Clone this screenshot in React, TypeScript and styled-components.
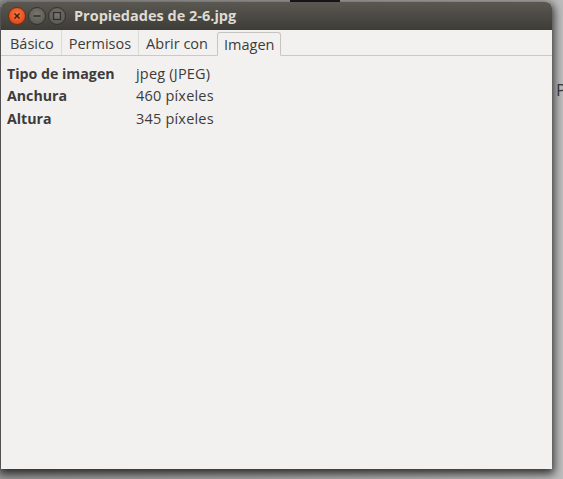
import React from "react";
import styled, { createGlobalStyle } from "styled-components";

const Global = createGlobalStyle`
  html, body { margin: 0; padding: 0; }
  body {
    width: 563px;
    height: 479px;
    overflow: hidden;
    background: #cfcfcf;
    font-family: "Open Sans", "DejaVu Sans", sans-serif;
  }
`;

const Desktop = styled.div`
  position: relative;
  width: 563px;
  height: 479px;
  overflow: hidden;
  background: linear-gradient(to right, #9a9a9a 0, #bdbdbd 100%);
`;

const BackgroundLetter = styled.span`
  position: absolute;
  left: 556px;
  top: 78px;
  font-size: 17px;
  color: #3c3c3c;
`;

const BackgroundBlock = styled.div`
  position: absolute;
  left: 290px;
  top: 0;
  width: 50px;
  height: 3px;
  background: #1c1d22;
`;

const Window = styled.div`
  position: absolute;
  left: 1px;
  top: 2px;
  width: 551px;
  height: 467px;
  display: flex;
  flex-direction: column;
  background: #f2f1f0;
  border-radius: 6px 6px 0 0;
  box-shadow: 0 3px 10px 2px rgba(0, 0, 0, 0.75);
  overflow: hidden;
`;

const TitleBar = styled.div`
  height: 28px;
  flex: none;
  display: flex;
  align-items: center;
  padding-left: 7px;
  background: linear-gradient(to bottom, #5a5851 0%, #3d3c37 100%);
`;

const Controls = styled.div`
  display: flex;
  gap: 2px;
  align-items: center;
`;

const WinButton = styled.div<{ $close?: boolean }>`
  width: 18px;
  height: 18px;
  border-radius: 50%;
  box-sizing: border-box;
  display: flex;
  align-items: center;
  justify-content: center;
  background: ${(p) =>
    p.$close
      ? "radial-gradient(circle at 50% 40%, #f47a4a 0%, #e5521f 60%, #c8401a 100%)"
      : "radial-gradient(circle at 50% 40%, #77766f 0%, #5d5c56 70%, #4a4944 100%)"};
  border: 1px solid ${(p) => (p.$close ? "#7a2a10" : "#34332f")};
`;

const Title = styled.div`
  margin-left: 8px;
  color: #dfdbd2;
  font-weight: 700;
  font-size: 14.5px;
  line-height: 1;
`;

const TabBar = styled.div`
  height: 25px;
  flex: none;
  display: flex;
  align-items: flex-end;
  padding-left: 2px;
  border-bottom: 1px solid #cbc9c5;
`;

const Tab = styled.div<{ $active?: boolean; $sep?: boolean }>`
  box-sizing: border-box;
  height: ${(p) => (p.$active ? "24px" : "25px")};
  padding: 0 ${(p) => (p.$active ? "6px" : "7px")};
  padding-top: ${(p) => (p.$active ? "0" : "1px")};
  display: flex;
  align-items: center;
  font-size: 14.5px;
  color: #3c3c3c;
  margin-bottom: ${(p) => (p.$active ? "-1px" : "0")};
  margin-left: ${(p) => (p.$active ? "2px" : "0")};
  background: #f2f1f0;
  border: ${(p) => (p.$active ? "1px solid #c6c4c0" : "none")};
  border-bottom: ${(p) => (p.$active ? "1px solid #f2f1f0" : "none")};
  border-radius: ${(p) => (p.$active ? "3px 3px 0 0" : "0")};
  border-right: ${(p) => (p.$sep ? "1px solid #dcdad6" : undefined)};
`;

const Content = styled.div`
  display: grid;
  grid-template-columns: 129px auto;
  grid-auto-rows: 22.5px;
  align-items: center;
  padding: 6px 0 0 6px;
  font-size: 14.5px;
  color: #3c3c3c;
`;

const Label = styled.div`
  font-weight: 700;
  font-size: 14.2px;
`;

const Value = styled.div`
  letter-spacing: 0.2px;
`;

export default function App() {
  return (
    <>
      <Global />
      <Desktop>
        <BackgroundBlock />
        <BackgroundLetter>P</BackgroundLetter>
        <Window>
          <TitleBar>
            <Controls>
              <WinButton $close>
                <svg width="8" height="8" viewBox="0 0 8 8">
                  <path d="M1.5 1.5 L6.5 6.5 M6.5 1.5 L1.5 6.5" stroke="#3a1a0c" strokeWidth="1.4" />
                </svg>
              </WinButton>
              <WinButton>
                <svg width="10" height="10" viewBox="0 0 10 10">
                  <path d="M1.5 5 L8.5 5" stroke="#2f2e2a" strokeWidth="1.3" />
                </svg>
              </WinButton>
              <WinButton>
                <svg width="10" height="10" viewBox="0 0 10 10">
                  <rect x="1.5" y="1.5" width="7" height="7" fill="none" stroke="#2f2e2a" strokeWidth="1.2" />
                </svg>
              </WinButton>
            </Controls>
            <Title>Propiedades de 2-6.jpg</Title>
          </TitleBar>
          <TabBar>
            <Tab $sep>Básico</Tab>
            <Tab $sep>Permisos</Tab>
            <Tab>Abrir con</Tab>
            <Tab $active>Imagen</Tab>
          </TabBar>
          <Content>
            <Label>Tipo de imagen</Label>
            <Value>jpeg (JPEG)</Value>
            <Label>Anchura</Label>
            <Value>460 píxeles</Value>
            <Label>Altura</Label>
            <Value>345 píxeles</Value>
          </Content>
        </Window>
      </Desktop>
    </>
  );
}
